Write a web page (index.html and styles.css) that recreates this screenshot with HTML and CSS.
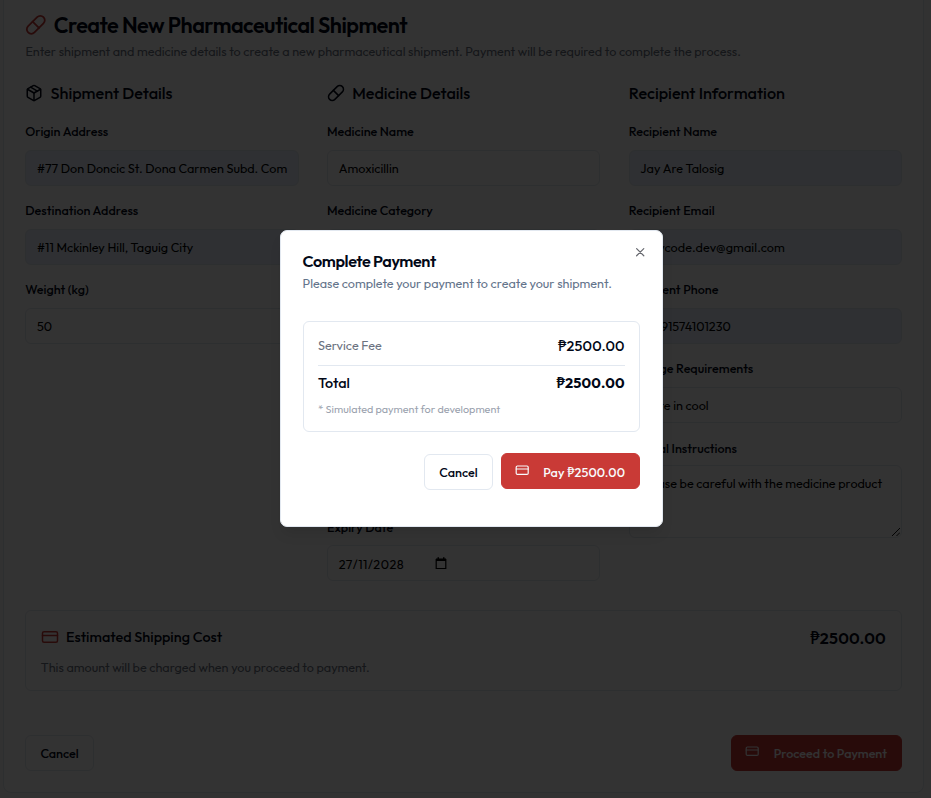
FILE: index.html
```html
<!DOCTYPE html>
<html lang="en">
<head>
<meta charset="utf-8">
<title>Create New Pharmaceutical Shipment</title>
<link rel="stylesheet" href="styles.css">
</head>
<body>
<svg class="sprite" aria-hidden="true">
  <symbol id="pill" viewBox="0 0 24 24"><path d="m10.5 20.5 10-10a4.95 4.95 0 1 0-7-7l-10 10a4.95 4.95 0 1 0 7 7Z"/><path d="m8.5 8.5 7 7"/></symbol>
  <symbol id="package" viewBox="0 0 24 24"><path d="m7.5 4.27 9 5.15"/><path d="M21 8a2 2 0 0 0-1-1.73l-7-4a2 2 0 0 0-2 0l-7 4A2 2 0 0 0 3 8v8a2 2 0 0 0 1 1.73l7 4a2 2 0 0 0 2 0l7-4A2 2 0 0 0 21 16Z"/><path d="m3.3 7 8.7 5 8.7-5"/><path d="M12 22V12"/></symbol>
  <symbol id="card" viewBox="0 0 24 24"><rect x="2" y="5" width="20" height="14" rx="2"/><path d="M2 10h20"/></symbol>
  <symbol id="close" viewBox="0 0 24 24"><path d="M18 6 6 18M6 6l12 12"/></symbol>
</svg>
<main class="panel">
  <header class="head">
    <h1><svg class="icon icon-lg red"><use href="#pill"/></svg><span>Create New Pharmaceutical Shipment</span></h1>
    <p class="muted lead">Enter shipment and medicine details to create a new pharmaceutical shipment. Payment will be required to complete the process.</p>
  </header>
  <div class="columns">
    <section class="column">
      <h2><svg class="icon icon-md"><use href="#package"/></svg><span>Shipment Details</span></h2>
      <div class="field"><span class="label">Origin Address</span><div class="input filled">#77 Don Doncic St. Dona Carmen Subd. Com</div></div>
      <div class="field"><span class="label">Destination Address</span><div class="input filled">#11 Mckinley Hill, Taguig City</div></div>
      <div class="field"><span class="label">Weight (kg)</span><div class="input">50</div></div>
    </section>
    <section class="column">
      <h2><svg class="icon icon-md"><use href="#pill"/></svg><span>Medicine Details</span></h2>
      <div class="field"><span class="label">Medicine Name</span><div class="input">Amoxicillin</div></div>
      <div class="field"><span class="label">Medicine Category</span><div class="input"></div></div>
      <div class="field"><span class="label"></span><div class="input"></div></div>
      <div class="field"><span class="label"></span><div class="input"></div></div>
      <div class="field"><span class="label"></span><div class="input"></div></div>
      <div class="field"><span class="label low">Expiry Date</span><div class="input date"><span class="date-text">27/11/2028</span><svg class="calendar" viewBox="0 0 12 13"><path d="M1.2 2.500h9.6v9H1.2z"/><path class="solid" d="M1 1.5h10v2.500H1zM2.5.3H4v2H2.5zM8 .3h1.500v2H8z"/></svg></div></div>
    </section>
    <section class="column">
      <h2><span>Recipient Information</span></h2>
      <div class="field"><span class="label">Recipient Name</span><div class="input filled">Jay Are Talosig</div></div>
      <div class="field"><span class="label">Recipient Email</span><div class="input filled email">jaaycode.dev@gmail.com</div></div>
      <div class="field"><span class="label">Recipient Phone</span><div class="input filled phone">+6391574101230</div></div>
      <div class="field"><span class="label">Storage Requirements</span><div class="input">Store in cool</div></div>
      <div class="field"><span class="label low">Special Instructions</span><div class="input area">Please be careful with the medicine product<svg class="grip" viewBox="0 0 8 8"><path d="M0 8 8 0M4.500 8 8 4.500"/></svg></div></div>
    </section>
  </div>
  <section class="cost">
    <div class="cost-row"><svg class="icon icon-md red"><use href="#card"/></svg><span class="cost-title">Estimated Shipping Cost</span><span class="cost-value">₱2500.00</span></div>
    <p class="muted cost-note">This amount will be charged when you proceed to payment.</p>
  </section>
  <footer class="actions">
    <button class="btn outline">Cancel</button>
    <button class="btn primary proceed"><svg class="icon icon-sm"><use href="#card"/></svg><span>Proceed to Payment</span></button>
  </footer>
</main>
<div class="overlay"></div>
<div class="modal" role="dialog">
  <svg class="icon close"><use href="#close"/></svg>
  <h3>Complete Payment</h3>
  <p class="modal-desc">Please complete your payment to create your shipment.</p>
  <div class="summary">
    <div class="row fee"><span class="fee-label">Service Fee</span><span class="fee-value">₱2500.00</span></div>
    <div class="row total"><span>Total</span><span class="total-value">₱2500.00</span></div>
    <p class="note">* Simulated payment for development</p>
  </div>
  <div class="modal-actions">
    <button class="btn outline lowered">Cancel</button>
    <button class="btn primary pay"><svg class="icon icon-sm"><use href="#card"/></svg><span>Pay ₱2500.00</span></button>
  </div>
</div>
</body>
</html>
```
FILE: styles.css
```css
* { box-sizing: border-box; }
body { margin: 0; height: 798px; overflow: hidden; background: #fafafa; color: #020817; font: 12.6px/18px Outfit, Lato, sans-serif; }
h1, h2, h3, p { margin: 0; }
.sprite { display: none; }
.icon { flex: none; fill: none; stroke: currentColor; stroke-width: 2; stroke-linecap: round; stroke-linejoin: round; }
.icon-lg { width: 21.6px; height: 21.6px; }
.icon-md { width: 18px; height: 18px; }
.icon-sm { width: 14.4px; height: 14.4px; }
.red { color: #c93a36; }
.muted { color: #6b7280; }
.panel { height: 803px; width: 921px; margin: -10px 0 0 3px; padding: 20px 21px 0; background: #fff; border: 1px solid #e2e8f0; border-radius: 8px; }
h1 { display: flex; align-items: center; gap: 7.2px; height: 28px; font-size: 21.6px; font-weight: 600; letter-spacing: -.54px; }
.lead { margin: 3px 0 0 .4px; }
.columns { display: grid; grid-template-columns: repeat(3, 273.300px); gap: 28.400px; margin: 22px 0 0 .3px; height: 528px; }
h2 { display: flex; align-items: center; gap: 7.2px; height: 22px; margin-bottom: 19px; font-size: 16.2px; font-weight: 500; }
.field { height: 79.1px; }
.label { display: block; height: 16px; line-height: 16px; margin-bottom: 11px; font-weight: 500; }
.low { padding-top: 1px; }
.input { display: flex; align-items: center; height: 36px; padding: 0 10.7px; border: 1px solid #e2e8f0; border-radius: 6px; white-space: nowrap; color: #000; }
.filled { background: #e8f0fe; }
.email { letter-spacing: .1px; }
.area { position: relative; height: 73px; margin-top: -1px; align-items: flex-start; padding-top: 8px; }
.grip { position: absolute; right: 1px; bottom: 1px; width: 8px; height: 8px; stroke: #111; fill: none; }
.date-text { letter-spacing: .5px; }
.date { padding-top: 1px; }
.calendar { width: 12px; height: 13px; margin: -1px 0 0 30.500px; fill: none; stroke: #000; stroke-width: 1.200; }
.solid { fill: #000; stroke: none; }
.cost { height: 81px; padding: 15px 15px; border: 1px solid #e2e8f0; border-radius: 6px; }
.cost-row { display: flex; align-items: center; gap: 7px; height: 22px; }
.cost-title { font-size: 14.4px; font-weight: 500; }
.cost-value { margin: 1px 0 0 auto; font-size: 16.2px; font-weight: 600; letter-spacing: .2px; }
.cost-note { margin: 10px 0 0 -.2px; }
.actions { display: flex; justify-content: space-between; margin-top: 44px; }
.btn { display: flex; align-items: center; height: 36px; padding: 0 14.4px; border: 1px solid #e2e8f0; border-radius: 6px; background: #fff; color: #020817; font: 500 12.6px/18px Outfit, Lato, sans-serif; white-space: nowrap; }
.primary { justify-content: space-between; padding: 0 14px 0 13px; background: #c93a36; border-color: #c93a36; color: #f8fafc; }
.primary .icon { margin-top: -3px; }
.proceed { width: 171px; }
.overlay { position: absolute; inset: 0; background: rgba(0, 0, 0, .8); }
.modal { position: absolute; left: 280px; top: 230px; width: 383px; height: 297px; padding: 19px 22px; background: #fff; border: 1px solid #e2e8f0; border-radius: 7px; box-shadow: 0 9px 14px -3px rgba(0, 0, 0, .1); }
.close { position: absolute; right: 15px; top: 13.600px; width: 14.4px; height: 14.4px; color: #67696f; }
h3 { height: 23px; line-height: 23px; margin-left: -.5px; font-size: 16.2px; font-weight: 600; letter-spacing: -.405px; }
.modal-desc { margin: 1px 0 0 -.5px; color: #64748b; }
.summary { height: 111px; margin-top: 29px; padding: 14px; border: 1px solid #e2e8f0; border-radius: 6px; }
.row { display: flex; align-items: center; justify-content: space-between; font-size: 14.4px; font-weight: 500; }
.fee { height: 30px; padding-bottom: 9px; border-bottom: 1px solid #e2e8f0; }
.fee-label { margin-top: -2px; color: #6b7280; font-size: 12.6px; font-weight: 400; }
.fee-value, .total-value { margin-right: .3px; letter-spacing: .2px; }
.total { height: 34px; }
.total-value { font-weight: 700; }
.note { font-size: 10.8px; color: #9ca3af; }
.modal-actions { display: flex; justify-content: flex-end; gap: 8px; margin-top: 21px; }
.lowered { margin-top: 1px; }
.pay { width: 139px; padding-top: 1px; letter-spacing: .1px; }
```
